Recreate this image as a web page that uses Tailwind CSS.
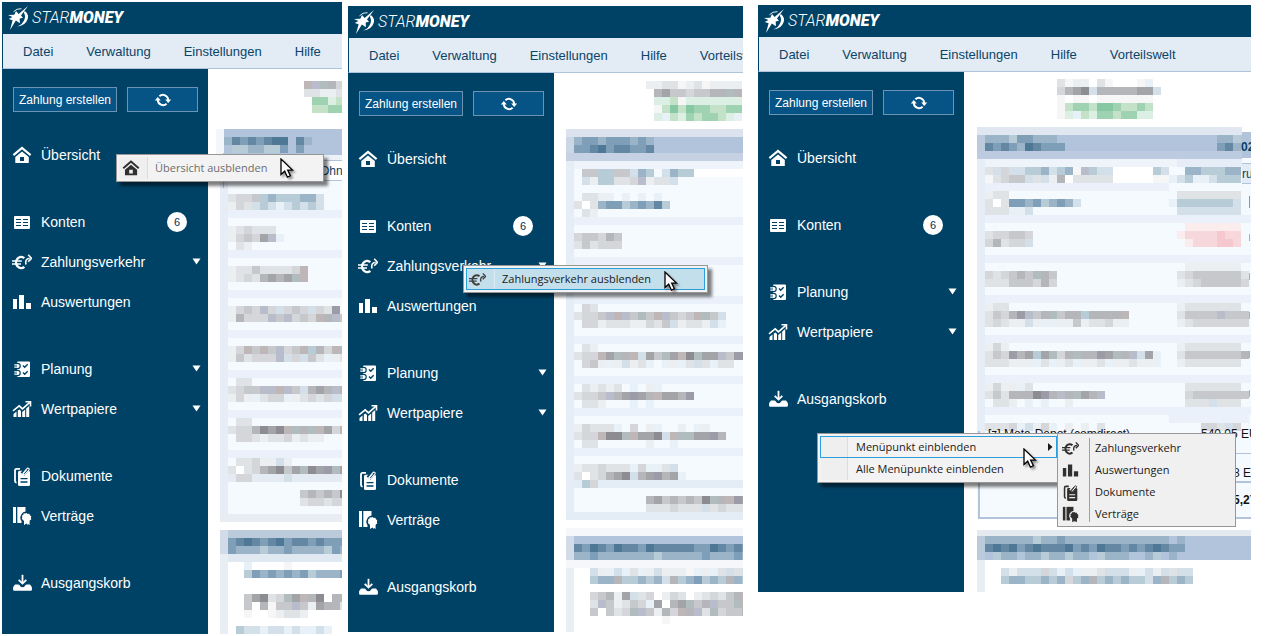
<!DOCTYPE html>
<html lang="de">
<head>
  <meta charset="UTF-8">
  <meta name="viewport" content="width=device-width, initial-scale=1.0">
  <title>StarMoney - Menüpunkte ein- und ausblenden</title>
  <script src="https://cdn.jsdelivr.net/npm/@tailwindcss/browser@4"></script>
</head>
<body class="bg-white font-['Liberation_Sans',sans-serif]">

  <!-- Icon sprite -->
  <svg class="absolute w-0 h-0" aria-hidden="true">
    <symbol id="i-home" viewBox="0 0 20 20">
      <path d="M1.4 10.2L10 2.9l8.6 7.3" fill="none" stroke="currentColor" stroke-width="2.2"/>
      <path fill="currentColor" fill-rule="evenodd" d="M10 6.4l6.8 5.6v6H3.300v-6zM8 12v4h4v-4z"/>
    </symbol>
    <symbol id="i-accounts" viewBox="0 0 20 20">
      <path fill="currentColor" fill-rule="evenodd" d="M3 4h14q1 0 1 1v11q0 1-1 1H3q-1 0-1-1V5q0-1 1-1zM4 7v1h5V7zM11 7v1h5V7zM4 10v1h5v-1zM11 10v1h5v-1zM4 13v1h5v-1zM11 13v1h5v-1z"/>
    </symbol>
    <symbol id="i-euro" viewBox="0 0 20 20">
      <path d="M12.300 6.200A5 5.600 0 1 0 12.300 14.800" fill="none" stroke="currentColor" stroke-width="2.400"/>
      <path d="M0 9h9.800M0 12h9" stroke="currentColor" stroke-width="1.400"/>
      <path d="M14 12.500q-1.400-5.600 3.600-6.200" fill="none" stroke="currentColor" stroke-width="1.600"/>
      <path d="M16.200 2.800l3.300 3.500-3.300 3.500" fill="none" stroke="currentColor" stroke-width="1.600"/>
    </symbol>
    <symbol id="i-bars" viewBox="0 0 20 20">
      <path fill="currentColor" d="M1 7h4v10H1zM7 3h5v14H7zM14 11h5v6h-5z"/>
    </symbol>
    <symbol id="i-plan" viewBox="0 0 20 20">
      <mask id="m-plan" maskUnits="userSpaceOnUse" x="0" y="0" width="20" height="20">
        <rect width="20" height="20" fill="#fff"/>
        <g fill="none" stroke="#000">
          <circle cx="5.500" cy="7" r="2.700" stroke-width="1.200"/>
          <circle cx="5.500" cy="14" r="2.700" stroke-width="1.200"/>
          <path d="M11 6.600l1.700 1.700 3-3M11 13.600l1.700 1.700 3-3" stroke-width="1.400"/>
        </g>
      </mask>
      <path mask="url(#m-plan)" fill="currentColor" d="M6 2.500h11q1 0 1 1v13.500q0 1-1 1H6q-1 0-1-1V3.500q0-1 1-1z"/>
      <path d="M2.300 5.800H5q1.700 0 1.700 1.100T5 8.100H2.300M2.300 12.800H5q1.700 0 1.700 1.100T5 15.100H2.300" fill="none" stroke="currentColor" stroke-width="1.200"/>
    </symbol>
    <symbol id="i-stocks" viewBox="0 0 20 20">
      <path d="M1 11.800L7.200 6.900l3.200 3L17.800 3.400" fill="none" stroke="currentColor" stroke-width="1.600"/>
      <path d="M13.500 2.800h5v4.700" fill="none" stroke="currentColor" stroke-width="1.600"/>
      <path fill="currentColor" d="M1.500 15l3-2.400V18h-3zM5.800 11.600l1.600-1.200L9 11.900V18H5.800zM10.200 13l3-2.500V18h-3zM14.200 9.600l3-2.600v11h-3z"/>
    </symbol>
    <symbol id="i-docs" viewBox="0 0 20 20">
      <path d="M8 2.800H4.600Q3 2.800 3 4.400V15q0 1.500 1.600 1.700" fill="none" stroke="currentColor" stroke-width="1.800"/>
      <mask id="m-docs" maskUnits="userSpaceOnUse" x="0" y="0" width="20" height="20">
        <rect width="20" height="20" fill="#fff"/>
        <path d="M8.500 12.700h7M8.500 16h7" stroke="#000" stroke-width="1.300"/>
        <path d="M10.500 8.200L15.500 2.500" stroke="#000" stroke-width="5"/>
      </mask>
      <path mask="url(#m-docs)" fill="currentColor" d="M7.500 4.800h9q1.500 0 1.500 1.500v12.200q0 1.500-1.500 1.500h-9Q6 20 6 18.500V6.300q0-1.500 1.500-1.500z"/>
      <path d="M10.500 7.800l4.200-5q1-1.200 2-.4t0 2L13 8.300q-.800.900-1.500.2t.200-1.500l2.900-3.400" fill="none" stroke="currentColor" stroke-width="1.100"/>
    </symbol>
    <symbol id="i-contract" viewBox="0 0 20 20">
      <mask id="m-contract" maskUnits="userSpaceOnUse" x="0" y="0" width="20" height="20">
        <rect width="20" height="20" fill="#fff"/>
        <path d="M14.500 5.500a6.200 6.200 0 0 0-5 9.800V20h9V6z" fill="#000"/>
      </mask>
      <path fill="currentColor" d="M1 1h3v16H1z"/>
      <path mask="url(#m-contract)" fill="currentColor" d="M5.300 1h8.200v16H5.300z"/>
      <path fill="currentColor" d="M14.500 7l1.300 1 1.600-.200.500 1.500 1.400.900-.400 1.600.400 1.600-1.400.900-.300 1.300v3.400l-1.600-1-1 1v-1l-.500-.500-2.500 1.500v-3.800l-.800-1.300-1.400-1 .500-1.600-.400-1.600 1.400-.900.500-1.500 1.600.200z"/>
    </symbol>
    <symbol id="i-outbox" viewBox="0 0 20 20">
      <path d="M10.500 1.800v8" stroke="currentColor" stroke-width="1.800"/>
      <path d="M6.700 6.800l3.800 3.800 3.800-3.800" fill="none" stroke="currentColor" stroke-width="1.800"/>
      <path fill="currentColor" d="M3 11.500h3.200q1.200 0 1.800 1.200.800 1.500 2.500 1.500t2.500-1.500q.600-1.200 1.800-1.200H18q2 1.800 2 4.700 0 1.600-1.400 1.600H2.400Q1 17.800 1 16.200q0-2.900 2-4.700z"/>
    </symbol>
    <symbol id="i-refresh" viewBox="0 0 18 16">
      <path d="M5.400 4.300A5.200 5.200 0 0 1 14.200 8M12.600 11.700A5.200 5.200 0 0 1 3.800 8" fill="none" stroke="currentColor" stroke-width="1.900"/>
      <path d="M11.200 7.600h6L14.200 11zM.800 8.400h6L3.800 5z" fill="currentColor"/>
    </symbol>
    <symbol id="i-star" viewBox="0 0 20 24">
      <path fill="currentColor" d="M0 9l6.300-.300L8 5l2.600 3L20 0l-7 9.600 2 2.200-3.300.800.200 4.600-4-2.600L2 24l2.600-9.700L.800 13l3.600-2z"/>
      <path fill="currentColor" d="M16.900 4.900q4.400 3.400 2.700 8.300-2.300 6.500-10.300 7.200 5.700-2 7.300-7.400 1.100-3.900-.9-6.600z"/>
      <path d="M5.500 5.800Q8.500 2.300 13.500 2.700" fill="none" stroke="currentColor" stroke-width=".900"/>
    </symbol>
    <symbol id="i-cursor" viewBox="0 0 14 21">
      <path d="M1 1v15.600l3.700-3.400 2.700 6 3-1.400-2.700-5.700h4.800z" fill="#fff" stroke="#000" stroke-width="1.300"/>
    </symbol>
  </svg>

  <div class="flex items-start pl-[2px] pr-7 pt-[2px]">

    <!-- Window 1: hide "Übersicht" -->
    <section class="relative flex-[340] min-w-0">
      <header class="h-8 bg-[#004266] text-white flex items-center pl-[6px] gap-1">
        <svg class="w-5 h-6 shrink-0"><use href="#i-star"/></svg>
        <span class="font-[Roboto,sans-serif] text-[16px] leading-none italic"><span class="font-light">STAR</span><span class="font-black">MONEY</span></span>
      </header>
      <nav class="h-[35px] pt-[2px] bg-[#e3ebf4] border-l border-l-[#004266] border-b border-b-[#afc3dd] flex items-center gap-[33px] pl-5 text-[13px] text-[#0a4468] whitespace-nowrap overflow-hidden">
        <a href="#">Datei</a>
        <a href="#">Verwaltung</a>
        <a href="#">Einstellungen</a>
        <a href="#">Hilfe</a>
      </nav>
      <div class="flex">
        <aside class="w-[206px] shrink-0 bg-[#004266] text-white pt-[18px]" data-sidebar="full"></aside>
        <main class="flex-1 min-w-0 overflow-hidden"><svg class="block max-w-none" data-mosaic="0"></svg></main>
      </div>
      <div class="absolute left-[114px] top-[152px] w-[208px] h-7 bg-[#f3f3f3] border border-[#979797] shadow-[4px_4px_3px_rgba(0,0,0,0.5)] p-[2px]">
        <button disabled class="w-full h-full flex items-center text-left font-['Open_Sans',sans-serif] text-[11px] text-[#6d6d6d]">
          <span class="w-[29px] h-full bg-[#efefef] border-r border-[#dcdcdc] flex items-center pl-[3px] shrink-0 text-[#303030]"><svg class="w-[18px] h-[18px]"><use href="#i-home"/></svg></span>
          <span class="pl-[7px] pt-px whitespace-nowrap">Übersicht ausblenden</span>
        </button>
      </div>
      <svg class="absolute left-[278px] top-[156px] w-[14px] h-[21px] drop-shadow-[2px_2px_1px_rgba(0,0,0,0.4)]"><use href="#i-cursor"/></svg>
    </section>

    <!-- Window 2: hide "Zahlungsverkehr" -->
    <section class="relative flex-[395] min-w-0 ml-[6px] mt-1">
      <header class="h-8 bg-[#004266] text-white flex items-center pl-[6px] gap-1">
        <svg class="w-5 h-6 shrink-0"><use href="#i-star"/></svg>
        <span class="font-[Roboto,sans-serif] text-[16px] leading-none italic"><span class="font-light">STAR</span><span class="font-black">MONEY</span></span>
      </header>
      <nav class="h-[35px] pt-[2px] bg-[#e3ebf4] border-l border-l-[#004266] border-b border-b-[#afc3dd] flex items-center gap-[33px] pl-5 text-[13px] text-[#0a4468] whitespace-nowrap overflow-hidden">
        <a href="#">Datei</a>
        <a href="#">Verwaltung</a>
        <a href="#">Einstellungen</a>
        <a href="#">Hilfe</a>
        <a href="#">Vorteilswelt</a>
      </nav>
      <div class="flex">
        <aside class="w-[206px] shrink-0 bg-[#004266] text-white pt-[18px]" data-sidebar="full"></aside>
        <main class="flex-1 min-w-0 overflow-hidden"><svg class="block max-w-none" data-mosaic="1"></svg></main>
      </div>
      <div class="absolute left-[115px] top-[259px] w-[245px] h-7 bg-[#f3f3f3] border border-[#979797] shadow-[4px_4px_3px_rgba(0,0,0,0.5)] p-[2px]">
        <button class="w-full h-full border border-[#2a9fdc] bg-[#c4dfec] flex items-center text-left font-['Open_Sans',sans-serif] text-[11px] text-[#1a1a1a]">
          <span class="w-7 h-full border-r border-[#dcebf3] flex items-center pl-[2px] shrink-0 text-[#404040]"><svg class="w-[17px] h-[17px]"><use href="#i-euro"/></svg></span>
          <span class="pl-[7px] pt-px whitespace-nowrap">Zahlungsverkehr ausblenden</span>
        </button>
      </div>
      <svg class="absolute left-[316px] top-[265px] w-[14px] h-[21px] drop-shadow-[2px_2px_1px_rgba(0,0,0,0.4)]"><use href="#i-cursor"/></svg>
    </section>

    <!-- Window 3: show hidden entries again -->
    <section class="relative flex-[493] min-w-0 ml-[15px] mt-[3px]">
      <header class="h-8 bg-[#004266] text-white flex items-center pl-[6px] gap-1">
        <svg class="w-5 h-6 shrink-0"><use href="#i-star"/></svg>
        <span class="font-[Roboto,sans-serif] text-[16px] leading-none italic"><span class="font-light">STAR</span><span class="font-black">MONEY</span></span>
      </header>
      <nav class="h-[35px] pt-[2px] bg-[#e3ebf4] border-l border-l-[#004266] border-b border-b-[#afc3dd] flex items-center gap-[33px] pl-5 text-[13px] text-[#0a4468] whitespace-nowrap overflow-hidden">
        <a href="#">Datei</a>
        <a href="#">Verwaltung</a>
        <a href="#">Einstellungen</a>
        <a href="#">Hilfe</a>
        <a href="#">Vorteilswelt</a>
      </nav>
      <div class="flex">
        <aside class="w-[206px] shrink-0 bg-[#004266] text-white pt-[18px]" data-sidebar="short"></aside>
        <main class="flex-1 min-w-0 overflow-hidden"><svg class="block max-w-none" data-mosaic="2"></svg></main>
      </div>
      <div class="absolute left-[59px] top-[428px] w-[243px] bg-[#f3f3f3] border border-[#979797] shadow-[4px_4px_3px_rgba(0,0,0,0.5)] p-[2px] font-['Open_Sans',sans-serif] text-[11px] text-[#1a1a1a]">
        <button class="w-full h-[22px] border border-[#2a9fdc] flex items-center text-left">
          <span class="w-[27px] h-full bg-[#efefef] border-r border-[#dcdcdc] shrink-0"></span>
          <span class="pl-2 pt-px flex-1 whitespace-nowrap">Menüpunkt einblenden</span>
          <svg class="w-[5px] h-2 mr-[3px]" viewBox="0 0 5 8"><path d="M0 0l4.500 4L0 8z" fill="#1a1a1a"/></svg>
        </button>
        <button class="w-full h-[22px] flex items-center text-left pl-px">
          <span class="w-[27px] h-full bg-[#efefef] border-r border-[#dcdcdc] shrink-0"></span>
          <span class="pl-2 pt-px whitespace-nowrap">Alle Menüpunkte einblenden</span>
        </button>
      </div>
      <div class="absolute left-[299px] top-[428px] w-[179px] bg-[#f0f0f0] border border-[#979797] pt-[3px] pb-px font-['Open_Sans',sans-serif] text-[11px] text-[#1a1a1a]">
        <div class="absolute left-[31px] inset-y-[4px] w-px bg-[#a0a0a0]"></div>
        <button class="w-full h-[22px] flex items-center text-left pl-1 gap-4"><svg class="w-[17px] h-[17px] text-[#303030]"><use href="#i-euro"/></svg>Zahlungsverkehr</button>
        <button class="w-full h-[22px] flex items-center text-left pl-1 gap-4"><svg class="w-[17px] h-[17px] text-[#303030]"><use href="#i-bars"/></svg>Auswertungen</button>
        <button class="w-full h-[22px] flex items-center text-left pl-1 gap-4"><svg class="w-[17px] h-[17px] text-[#303030]"><use href="#i-docs"/></svg>Dokumente</button>
        <button class="w-full h-[22px] flex items-center text-left pl-1 gap-4"><svg class="w-[17px] h-[17px] text-[#303030]"><use href="#i-contract"/></svg>Verträge</button>
      </div>
      <svg class="absolute left-[265px] top-[443px] w-[14px] h-[21px] drop-shadow-[2px_2px_1px_rgba(0,0,0,0.4)]"><use href="#i-cursor"/></svg>
    </section>
  </div>

  <script>
    // Sidebar entries, grouped as in the menu
    const menus = {
      full: [
        [['home', 'Übersicht']],
        [['accounts', 'Konten', '6'], ['euro', 'Zahlungsverkehr', '', true], ['bars', 'Auswertungen']],
        [['plan', 'Planung', '', true], ['stocks', 'Wertpapiere', '', true]],
        [['docs', 'Dokumente'], ['contract', 'Verträge']],
        [['outbox', 'Ausgangskorb']]
      ],
      short: [
        [['home', 'Übersicht']],
        [['accounts', 'Konten', '6']],
        [['plan', 'Planung', '', true], ['stocks', 'Wertpapiere', '', true]],
        [['outbox', 'Ausgangskorb']]
      ]
    };

    function renderItem([icon, label, badge, caret]) {
      return `
        <a href="#" class="h-10 flex items-center pl-[10px] pr-[7px]">
          <svg class="w-5 h-5 shrink-0"><use href="#i-${icon}"/></svg>
          <span class="ml-[9px] flex-1 text-[14px]">${label}</span>
          ${badge ? `<span class="w-5 h-5 mr-[14px] rounded-full bg-white text-[#003355] text-[11px] flex items-center justify-center">${badge}</span>` : ''}
          ${caret ? `<svg class="w-[9px] h-[7px] mb-[2px]" viewBox="0 0 9 7"><path d="M.500.500h8l-4 6z" fill="#fff"/></svg>` : ''}
        </a>`;
    }

    document.querySelectorAll('[data-sidebar]').forEach((el) => {
      el.innerHTML = `
        <div class="flex gap-[10px] pl-[11px] pr-[10px] mb-[23px]">
          <button class="w-[104px] h-[25px] shrink-0 border border-[#6c92b4] bg-[#055485] text-[12px] whitespace-nowrap">Zahlung erstellen</button>
          <button aria-label="Aktualisieren" class="flex-1 h-[25px] border border-[#6c92b4] bg-[#055485] flex items-center justify-center"><svg class="w-[18px] h-4"><use href="#i-refresh"/></svg></button>
        </div>
        <div class="flex flex-col gap-[27px]">
          ${menus[el.dataset.sidebar].map((group) => `<div>${group.map(renderItem).join('')}</div>`).join('')}
        </div>`;
    });

    // Pixelated account data: every letter is one 8px tile
    const tones = {
      0: '#f6f6f6', 1: '#eceff2', 2: '#e0e3e6', 3: '#d4d6d9', 4: '#c6c8cb', 5: '#b4b6ba', 6: '#a2a4a8', 7: '#8c8c92',
      a: '#e8f0f8', b: '#d4e0e9', c: '#b8ccd8', d: '#9cb4c8', e: '#7f9fb8', f: '#6488a4', g: '#4f7897',
      p: '#bfb6b8', q: '#b8bccb', r: '#b0bcbe', h: '#9c9ca8', w: '#ffffff',
      G: '#9ed2b0', H: '#c4e2c8', I: '#dcefe4', J: '#86c8a4',
      R: '#f4c8cc', S: '#f6d8dc', T: '#fbecee'
    };
    const BODY = '#f5faff', LINE = '#ebf1fa', HEAD = '#b2c3dc', EDGE = '#e6edf6', W = 600;

    // view: x y w h, rects: [x, y, w, h, colour], tiles: [x, y, letters], texts: [x, y, text, weight, colour]
    const mosaics = [
      {
        view: [208, 69, W, 565],
        rects: [
          [224, 129, W, 26, HEAD], [216, 129, 8, 26, '#f3f6fb'], [220, 155, W, 367, BODY], [220, 155, 8, 367, EDGE],
          [224, 155, W, 6, '#edf2fa'], [223, 153, 1, 35, '#a9bdd8'],
          [300, 161, W, 19, '#ffffff'], [300, 160, W, 1, HEAD], [300, 180, W, 1, HEAD],
          [228, 210, W, 8, LINE], [228, 250, W, 8, LINE], [228, 290, W, 8, LINE], [228, 330, W, 8, LINE],
          [228, 370, W, 8, LINE], [228, 410, W, 8, LINE], [228, 450, W, 8, LINE], [228, 474, W, 8, '#e4ebf3'],
          [220, 514, W, 8, '#e9edf3'],
          [220, 530, W, 8, '#bccbdc'], [220, 538, W, 16, HEAD], [220, 554, W, 8, '#e0e8f1'],
          [220, 530, 8, 24, '#d2dce8'], [220, 554, 8, 80, '#e9eef5']
        ],
        tiles: [
          [304, 81, 'pqr53'], [304, 89, '22112'], [304, 97, '.GGIH'], [304, 105, '.HHGG'],
          [224, 137, 'dfefefgg.fd'], [224, 145, '.ccddcce.e'],
          [228, 194, '2334cdcccddb'], [228, 202, '132bcbabcbcb'],
          [228, 226, '123222'], [228, 234, '13436qa'], [228, 242, '.21'],
          [228, 266, '122422223p'], [228, 274, '12325656rp'],
          [228, 306, '1343q3b343b32h'], [228, 314, '15333q4q343p5q4'],
          [228, 346, '13p4p4q34pc53pr'], [228, 354, '142333qb3b42a12'],
          [228, 378, '.22'], [228, 386, '2344qqpq4b565q5'], [228, 394, '131a233a12323bb'],
          [228, 418, '.22'], [228, 426, '2335767pr5rp63p'], [228, 434, '.33212231211'],
          [228, 458, '.22311b1'], [228, 466, '2w2356746r76hr6'], [228, 474, '.33....b'],
          [300, 490, '454547'], [300, 498, '233233'],
          [228, 538, 'efgfefgeffefeee'], [228, 546, 'edddcddeddddced'],
          [244, 562, 'a....0'], [244, 570, 'cedededecddde'],
          [244, 594, '46723r6p57w557'], [244, 602, '4w5044q4165526'], [244, 610, '0..01221'],
          [236, 626, 'cbbabbabaaba']
        ],
        texts: [[320, 175, 'Ohn', 400, '#0a3f63']]
      },
      {
        view: [554, 73, W, 559],
        rects: [
          [566, 129, W, 8, '#dce3ee'], [566, 137, W, 16, HEAD], [566, 153, W, 8, '#c6d1e3'], [566, 137, 8, 16, '#ccd7e6'],
          [566, 161, W, 359, BODY], [566, 161, 8, 359, EDGE], [574, 161, W, 8, '#eff4fb'], [694, 169, W, 8, '#ffffff'],
          [574, 177, W, 8, '#f6f9fd'],
          [574, 217, W, 8, LINE], [574, 257, W, 8, LINE], [574, 296, W, 8, LINE], [574, 336, W, 8, LINE],
          [574, 376, W, 8, LINE], [574, 408, W, 8, LINE], [574, 448, W, 8, LINE], [574, 480, W, 8, '#e4edf5'],
          [566, 512, W, 8, '#e4edf5'],
          [566, 528, W, 8, '#f5f7fb'], [566, 536, W, 24, HEAD], [566, 560, W, 8, '#f5f7fb'],
          [566, 536, 8, 24, '#d2dce8'], [566, 568, 8, 64, '#e9eef5']
        ],
        tiles: [
          [646, 81, '112201201111'], [646, 89, '.564434455r5'], [654, 97, 'IIH0IIIIIII'], [654, 105, '0HJHJGGHHGG'], [654, 113, 'IaHIGHGGHIa'],
          [574, 137, 'deedeeeded'], [574, 145, 'eefgeffeef'],
          [582, 169, '44cc44bdc.bdcc'], [582, 177, 'b1cc223q122b'],
          [574, 193, '.221a.a.a.a'], [574, 201, '2w2deecdedfc'], [574, 209, '.21'],
          [574, 233, '344354'], [574, 241, '242333'],
          [574, 304, '.32'], [574, 312, '2334qpq4r4pq434pr4b'], [574, 320, '.33122211324b1221ba'],
          [574, 344, '.21'], [574, 352, '233p6r5pb64r6p7r66q4hh'], [574, 360, '.341a1b12a.a1a2b2a22'],
          [574, 384, '.21212.a.1a'], [574, 392, '2334q56h65p665h'], [574, 400, '.221...a.a'],
          [574, 424, '13222a.3.1a..1.a1'], [574, 432, '233p77rp667bprr66h5'], [574, 440, '.22......1..a'],
          [574, 464, '1223222a3aa2b'], [574, 472, '2w23567b56h56a'], [574, 480, '.c3'],
          [646, 496, '56454547r5ph66'], [646, 504, '2223222b23222b'],
          [574, 544, 'fegfegffegfffffeegfefe'], [574, 552, 'ddedddddddcdddddeddded'],
          [590, 568, 'b1aba2a1b1110a1a2b2bab'], [590, 576, 'cdd5ccdcdb5cdecdc5dcdb'],
          [590, 592, '34516b23w132w123245p26'], [590, 600, '2q41243a6w56r45q44rp7h'], [590, 608, '4w423rq4153p5q2r344564'],
          [662, 616, '0']
        ],
        texts: []
      },
      {
        view: [964, 72, W, 520],
        rects: [
          [977, 127, 265, 8, '#e0e7f1'], [977, 135, 265, 16, HEAD], [977, 151, 265, 8, '#bccbe0'], [1242, 132, W, 26, HEAD],
          [977, 135, 8, 16, '#bccbdc'], [977, 159, W, 360, BODY], [977, 159, 8, 274, EDGE], [985, 159, 192, 8, '#eff4fb'],
          [1177, 159, 65, 8, '#e6edf7'], [1242, 163, W, 21, '#e3ebf5'], [1242, 163, W, 1, HEAD], [1242, 183, W, 1, HEAD],
          [985, 183, 184, 8, LINE], [1105, 167, 48, 16, '#ffffff'],
          [985, 215, W, 8, LINE], [985, 255, W, 8, LINE], [985, 295, W, 8, LINE], [985, 335, W, 8, LINE],
          [985, 375, W, 8, LINE], [985, 407, W, 8, LINE], [1169, 415, 80, 8, LINE],
          [978, 431, 2, 88, HEAD], [978, 453, W, 1, HEAD], [978, 481, W, 2, HEAD], [978, 517, W, 2, HEAD],
          [977, 519, W, 11, '#ffffff'],
          [977, 530, W, 6, '#e4eaf0'], [977, 536, W, 24, HEAD], [977, 536, 8, 24, '#bccbdc'],
          [977, 560, W, 32, '#ffffff'], [977, 560, 8, 32, '#e9eef5'],
          [1249, 196, 1, 12, '#c08a6a'], [1249, 234, 1, 7, '#e0a850'], [1249, 273, 1, 7, '#e0a850'],
          [1249, 312, 1, 7, '#e0a850'], [1249, 351, 1, 7, '#e0a850'], [1249, 390, 1, 7, '#e0a850']
        ],
        tiles: [
          [1057, 79, '2011.20...0a'], [1057, 87, '3567b5555566b'], [1057, 95, '0.00.0000000'], [1057, 103, '0HGGHJJGHHGH'], [1057, 111, '0IaHIGGHGGII'],
          [985, 135, 'dddceeddd'], [985, 143, 'fefedgfeee'], [1217, 135, 'ddc'], [1217, 143, 'efd'],
          [985, 167, '2b3bbccdbcd0qcbb'], [985, 175, '02344b2b15w22222'], [1153, 167, 'cb'], [1153, 175, '00abab'],
          [1185, 167, 'ddcccdd'], [1185, 175, 'caabccc'],
          [985, 191, '122'], [985, 199, '2w2eedecdedb'], [985, 207, '222aab'],
          [1177, 191, '22222222'], [1169, 199, 'acccccccb'], [1177, 207, 'bbbbbbbb'],
          [985, 231, '233443'], [985, 239, '35233b'], [1185, 223, 'TTTTTTT'], [1177, 231, 'TSSSSRSS'], [1177, 239, '.TSSSRRS'],
          [985, 271, '323454r54'], [985, 279, '222444353'], [1185, 263, '1111111'], [1177, 271, '234444442'], [1177, 279, '123444443'],
          [985, 303, '122'], [985, 311, '2435hq45r455c5555p'], [985, 319, '23211b1aa114122311'],
          [1177, 303, '12222222'], [1177, 311, '24444q444'], [1177, 319, '123333333'],
          [985, 343, '131'], [985, 351, '243h56c6r35r55h6r5qb6a'], [985, 359, '222111a2a12a112a11211a'],
          [1177, 343, '12222222'], [1177, 351, '244444445'], [1177, 359, '12222222'],
          [985, 383, '1311a2'], [985, 391, '2425557h5q5r65q'], [985, 399, '.221.a.a..1'],
          [1185, 383, '2222222'], [1185, 391, '34444444'], [1185, 399, '222b222'],
          [985, 423, '2223ab13a.1.1.2'], [1201, 423, '332b3'],
          [985, 536, 'ddddddcddeddddddddddddd.d'], [985, 544, 'fgfgefgfffgefegffefefgfee'], [985, 552, '.cdd.ddcddcdd.cddd..dc.d'],
          [1001, 568, 'b1bbb3baba112bbb1ab1b2bb'], [1001, 576, 'cddccdcd3cd5cdcdccbd5cdc']
        ],
        texts: [
          [1241, 151, '02', 700, '#0a3f63'], [1242, 178, 'ru', 400, '#0a3f63'],
          [988, 438, '[z] Mota-Depot (comdirect)', 400, '#111111'], [1201, 438, '540,05 EUR', 400, '#111111'],
          [1233, 477, '8 EUR', 400, '#111111'], [1233, 504, '5,27', 700, '#111111']
        ]
      }
    ];

    document.querySelectorAll('[data-mosaic]').forEach((svg) => {
      const { view, rects, tiles, texts } = mosaics[svg.dataset.mosaic];
      svg.setAttribute('viewBox', view.join(' '));
      svg.setAttribute('width', view[2]);
      svg.setAttribute('height', view[3]);
      let out = rects.map(([x, y, w, h, c]) => `<rect x="${x}" y="${y}" width="${w}" height="${h}" fill="${c}"/>`).join('');
      tiles.forEach(([x, y, row]) => {
        [...row].forEach((t, i) => {
          if (tones[t]) out += `<rect x="${x + i * 8}" y="${y}" width="8" height="8" fill="${tones[t]}"/>`;
        });
      });
      texts.forEach(([x, y, t, weight, c]) => {
        out += `<text x="${x}" y="${y}" font-size="12" font-weight="${weight}" fill="${c}">${t}</text>`;
      });
      svg.innerHTML = out;
    });
  </script>

</body>
</html>
